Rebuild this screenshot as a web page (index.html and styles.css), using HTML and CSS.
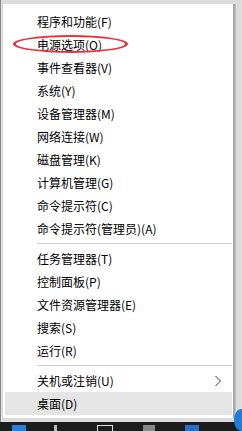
FILE: index.html
```html
<!DOCTYPE html>
<html>
<head>
    <title>Win+X 菜单</title>
    <link rel="stylesheet" href="styles.css">
</head>
<body>

<div class="desk">
  <div class="menu">
    <div class="item">程序和功能(F)</div>
    <div class="item">电源选项(O)</div>
    <div class="item">事件查看器(V)</div>
    <div class="item">系统(Y)</div>
    <div class="item">设备管理器(M)</div>
    <div class="item">网络连接(W)</div>
    <div class="item">磁盘管理(K)</div>
    <div class="item">计算机管理(G)</div>
    <div class="item">命令提示符(C)</div>
    <div class="item">命令提示符(管理员)(A)</div>
    <div class="sep"></div>
    <div class="item">任务管理器(T)</div>
    <div class="item">控制面板(P)</div>
    <div class="item">文件资源管理器(E)</div>
    <div class="item">搜索(S)</div>
    <div class="item">运行(R)</div>
    <div class="sep"></div>
    <div class="item sub">关机或注销(U)
      <svg class="arrow" width="8" height="12" viewBox="0 0 8 12"><path d="M1.5 1 L6.5 6 L1.5 11" fill="none" stroke="#333" stroke-width="1"/></svg>
    </div>
    <div class="item active">桌面(D)</div>
  </div>
  <div class="mark"></div>
  <div class="edge"></div>
</div>

<div class="taskbar">
  <span class="tb win"></span>
  <span class="tb pen"></span>
  <span class="tb box"></span>
  <span class="tb dots"></span>
  <span class="tb blue"></span>
</div>

</body>
</html>
```

FILE: styles.css
```css
body {
    margin: 0;
    width: 242px;
    height: 431px;
    overflow: hidden;
    background: #1c1c1c;
    font-family: "Noto Sans CJK SC", "Noto Sans", sans-serif;
    font-size: 12px;
    color: #000;
}
.desk {
    position: relative;
    height: 422px;
    padding: 4px 0 0 2px;
    box-sizing: border-box;
    background: #dcdcdc;
    border-left: 1px solid #8a8a8a;
}
.menu {
    width: 230px;
    background: #fff;
    padding: 6px 1px 3px 2px;
    box-sizing: border-box;
    box-shadow: 2px 0 0 #a8a8a8, 3px 0 0 #c4c4c4;
}
.item {
    position: relative;
    height: 23px;
    line-height: 23px;
    padding-left: 32px;
    white-space: nowrap;
}
.item.active {
    background: #e5e5e5;
}
.arrow {
    position: absolute;
    right: 10px;
    top: 6px;
}
.sep {
    height: 1px;
    background: #d0d0d0;
    margin: 3px 0 3px 32px;
}
.mark {
    position: absolute;
    left: 12px;
    top: 35px;
    width: 109px;
    height: 14px;
    border: 2px solid #e8333a;
    border-width: 2px 3px;
    border-radius: 50%;
}
.edge {
    position: absolute;
    right: -6px;
    bottom: -9px;
    width: 14px;
    height: 22px;
    border-radius: 50%;
    background: #1f7fd6;
}
.taskbar {
    height: 9px;
    display: flex;
    gap: 10px;
    padding-left: 12px;
}
.tb {
    height: 6px;
    margin-top: 3px;
}
.win {
    width: 14px;
    background: #2b7fd4;
}
.pen {
    width: 3px;
    background: #bbb;
    margin-left: 18px;
}
.box {
    width: 14px;
    border: 1px solid #ddd;
    border-bottom: none;
    margin-left: 30px;
}
.dots {
    width: 12px;
    background: #888;
    margin-left: 20px;
}
.blue {
    width: 14px;
    background: #2b6fc4;
    margin-left: 20px;
}
```
